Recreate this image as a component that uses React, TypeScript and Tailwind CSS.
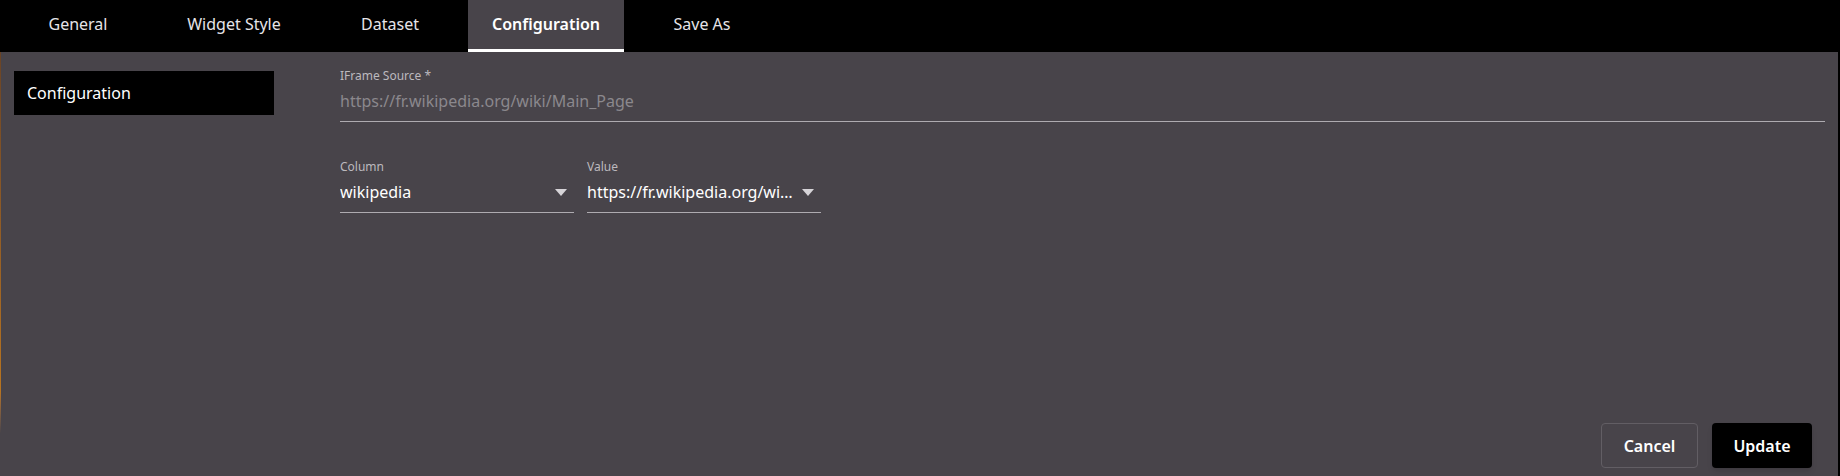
import { useState } from 'react'

const tabs = ['General', 'Widget Style', 'Dataset', 'Configuration', 'Save As']

function Caret() {
  return (
    <svg width="12" height="7" viewBox="0 0 12 7" className="shrink-0">
      <path d="M0 0 L12 0 L6 7 Z" fill="#d6d4d8" />
    </svg>
  )
}

function SelectField({ label, value }: { label: string; value: string }) {
  return (
    <div className="w-[234px] flex flex-col">
      <span className="text-[12px] leading-[16px] text-[#bcb9be]">{label}</span>
      <div className="h-[38px] flex items-start gap-2 border-b border-[#aeabb0] pt-[6px]">
        <span className="flex-1 truncate text-[16px] leading-[22px] text-white">{value}</span>
        <span className="pr-[7px] pt-[8px]">
          <Caret />
        </span>
      </div>
    </div>
  )
}

export default function App() {
  const [active, setActive] = useState('Configuration')

  return (
    <div
      className="w-full h-[476px] flex flex-col bg-black overflow-hidden"
      style={{ fontFamily: '"Noto Sans", "Open Sans", sans-serif' }}
    >
      {/* Tabs */}
      <div className="h-[52px] flex shrink-0">
        {tabs.map((t) => (
          <button
            key={t}
            onClick={() => setActive(t)}
            className={
              t === active
                ? 'w-[156px] h-full flex items-center justify-center bg-[#48444a] border-b-[3px] border-white pb-[2px] text-[16px] font-semibold text-white'
                : 'w-[156px] h-full flex items-center justify-center pb-[5px] text-[16px] text-[#e6e4e8]'
            }
          >
            {t}
          </button>
        ))}
      </div>

      {/* Body */}
      <div className="flex-1 flex mr-[2px] bg-[#48444a]">
        <div className="w-px bg-gradient-to-b from-[#6a4426] via-[#b8741f] via-80% to-[#48444a] to-90%" />

        {/* Sidebar */}
        <div className="w-[339px] shrink-0 pt-[19px] pl-[13px]">
          <div className="w-[260px] h-[44px] bg-black flex items-center px-[13px] text-[16px] text-white">
            Configuration
          </div>
        </div>

        {/* Form */}
        <div className="flex-1 flex flex-col pr-[13px] pt-[16px] pb-[8px]">
          <div className="flex flex-col">
            <span className="text-[12px] leading-[16px] text-[#bcb9be]">IFrame Source *</span>
            <div className="h-[38px] border-b border-[#aeabb0] pt-[6px] text-[16px] leading-[22px] text-[#8b888d]">
              https://fr.wikipedia.org/wiki/Main_Page
            </div>
          </div>

          <div className="mt-[37px] flex gap-[13px]">
            <SelectField label="Column" value="wikipedia" />
            <SelectField label="Value" value="https://fr.wikipedia.org/wiki/Main_Page" />
          </div>

          <div className="mt-auto flex justify-end gap-[14px] pr-[13px]">
            <button className="w-[97px] h-[45px] rounded-[4px] border border-[#625e64] text-[16px] font-semibold text-white">
              Cancel
            </button>
            <button className="w-[100px] h-[45px] rounded-[4px] bg-black text-[16px] font-semibold text-white shadow-md">
              Update
            </button>
          </div>
        </div>
      </div>
    </div>
  )
}
